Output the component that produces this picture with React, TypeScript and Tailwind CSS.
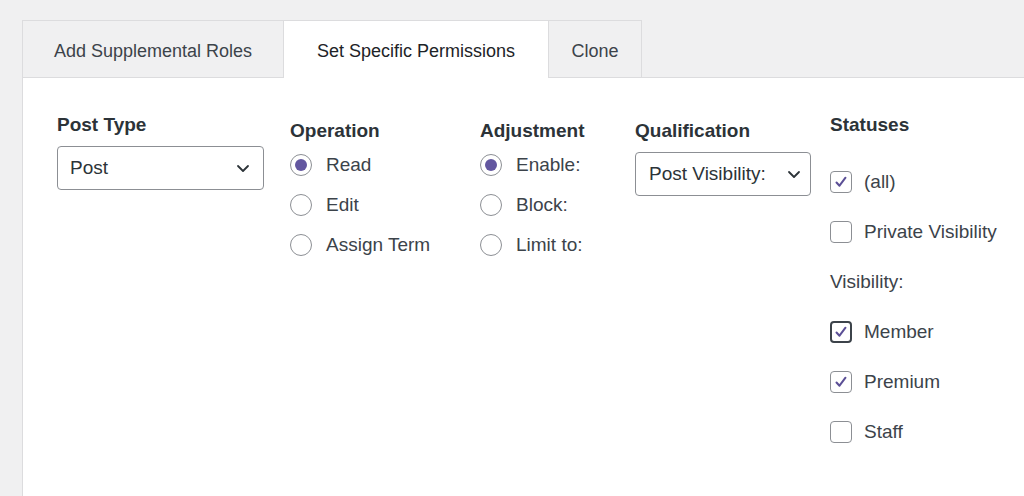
import React from 'react';

const Radio = ({ on }: { on?: boolean }) => (
  <span className="w-[22px] h-[22px] rounded-full border border-[#8c8f94] bg-white flex items-center justify-center shrink-0">
    {on && <span className="w-[12px] h-[12px] rounded-full bg-[#6357a0]" />}
  </span>
);

const Check = ({ on, focus }: { on?: boolean; focus?: boolean }) => (
  <span className={`w-[22px] h-[22px] rounded-[4px] bg-white flex items-center justify-center shrink-0 ${focus ? 'border-2 border-[#3c434a]' : 'border border-[#8c8f94]'}`}>
    {on && (
      <svg width="16" height="16" viewBox="0 0 16 16" fill="none">
        <path d="M3.5 8.5l3 3.2 6-8" stroke="#5b4f96" strokeWidth="2" strokeLinecap="round" strokeLinejoin="round" />
      </svg>
    )}
  </span>
);

const Chevron = () => (
  <svg width="16" height="16" viewBox="0 0 16 16" fill="none">
    <path d="M3 6l5 5 5-5" stroke="#2c3338" strokeWidth="1.8" strokeLinecap="round" strokeLinejoin="round" />
  </svg>
);

export default function App() {
  const font = { fontFamily: '"Liberation Sans", Arial, sans-serif' };
  return (
    <div className="w-[1024px] h-[496px] bg-[#f0f0f1] overflow-hidden text-[#3c434a]" style={font}>
      <div className="pt-[20px] pl-[22px]">
        <div className="flex h-[58px] text-[18px]">
          <div className="w-[262px] flex items-center justify-center bg-[#f0f0f1] border border-[#dcdcde] pt-[4px]">Add Supplemental Roles</div>
          <div className="w-[264px] flex items-center justify-center bg-white border-t border-[#dcdcde] text-[#1d2327] pt-[4px]">Set Specific Permissions</div>
          <div className="w-[94px] flex items-center justify-center bg-[#f0f0f1] border border-[#dcdcde] pt-[4px]">Clone</div>
          <div className="flex-1 border-b border-[#dcdcde]" />
        </div>
        <div className="bg-white h-[440px] border-l border-[#dcdcde] flex pl-[34px] text-[19px]">
          <div className="w-[233px] pt-[36px]">
            <div className="font-bold text-[#2c3338] leading-[22px]">Post Type</div>
            <div className="mt-[10px] w-[207px] h-[44px] border border-[#8c8f94] rounded-[4px] flex items-center justify-between px-[12px] text-[#2c3338]">
              <span>Post</span><Chevron />
            </div>
          </div>
          <div className="w-[190px] pt-[42px]">
            <div className="font-bold text-[#2c3338] leading-[22px]">Operation</div>
            <div className="mt-[12px] flex flex-col gap-[18px]">
              <label className="flex items-center gap-[14px] h-[22px]"><Radio on />Read</label>
              <label className="flex items-center gap-[14px] h-[22px]"><Radio />Edit</label>
              <label className="flex items-center gap-[14px] h-[22px]"><Radio />Assign Term</label>
            </div>
          </div>
          <div className="w-[155px] pt-[42px]">
            <div className="font-bold text-[#2c3338] leading-[22px]">Adjustment</div>
            <div className="mt-[12px] flex flex-col gap-[18px]">
              <label className="flex items-center gap-[14px] h-[22px]"><Radio on />Enable:</label>
              <label className="flex items-center gap-[14px] h-[22px]"><Radio />Block:</label>
              <label className="flex items-center gap-[14px] h-[22px]"><Radio />Limit to:</label>
            </div>
          </div>
          <div className="w-[195px] pt-[42px]">
            <div className="font-bold text-[#2c3338] leading-[22px]">Qualification</div>
            <div className="mt-[10px] w-[176px] h-[44px] border border-[#8c8f94] rounded-[4px] flex items-center justify-between pl-[13px] pr-[8px] text-[#2c3338]">
              <span>Post Visibility:</span><Chevron />
            </div>
          </div>
          <div className="pt-[36px]">
            <div className="font-bold text-[#2c3338] leading-[22px]">Statuses</div>
            <div className="mt-[35px] flex flex-col gap-[28px]">
              <label className="flex items-center gap-[12px] h-[22px]"><Check on />(all)</label>
              <label className="flex items-center gap-[12px] h-[22px]"><Check />Private Visibility</label>
              <div className="h-[22px] flex items-center">Visibility:</div>
              <label className="flex items-center gap-[12px] h-[22px]"><Check on focus />Member</label>
              <label className="flex items-center gap-[12px] h-[22px]"><Check on />Premium</label>
              <label className="flex items-center gap-[12px] h-[22px]"><Check />Staff</label>
            </div>
          </div>
        </div>
      </div>
    </div>
  );
}
